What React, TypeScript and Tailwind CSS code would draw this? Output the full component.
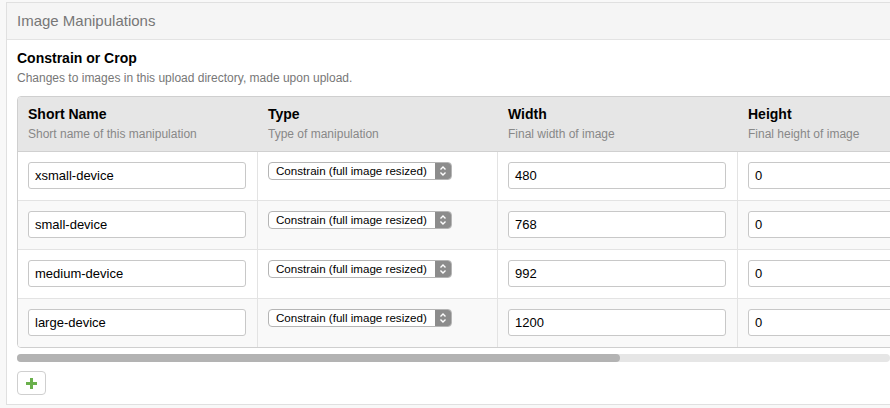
import React from 'react';

const columns = [
  { title: 'Short Name', hint: 'Short name of this manipulation' },
  { title: 'Type', hint: 'Type of manipulation' },
  { title: 'Width', hint: 'Final width of image' },
  { title: 'Height', hint: 'Final height of image' },
  { title: 'Quality', hint: 'Image quality' },
];

const rows = [
  { name: 'xsmall-device', width: '480', height: '0' },
  { name: 'small-device', width: '768', height: '0' },
  { name: 'medium-device', width: '992', height: '0' },
  { name: 'large-device', width: '1200', height: '0' },
];

const SelectBox = () => (
  <div className="flex h-[18px] w-[184px] items-center rounded-[4px] border border-[#b5b5b5] bg-white overflow-hidden">
    <span className="flex-1 pl-[7px] text-[11.6px] leading-none text-black">Constrain (full image resized)</span>
    <span className="flex h-full w-[16px] items-center justify-center bg-[#8c8c8c]">
      <svg width="8" height="12" viewBox="0 0 8 12" fill="none" stroke="white" strokeWidth="1.4">
        <path d="M1.5 4.5 L4 2 L6.5 4.5" />
        <path d="M1.5 7.5 L4 10 L6.5 7.5" />
      </svg>
    </span>
  </div>
);

const TextInput = ({ value }: { value: string }) => (
  <div className="flex h-[27px] w-[218px] items-center rounded-[3px] border border-[#c8c8c8] bg-white pl-[6px] text-[13px] text-black">
    {value}
  </div>
);

const App = () => {
  return (
    <div
      className="h-[408px] w-[890px] overflow-hidden bg-[#f8f8f8] pl-[6px] pt-[2px]"
      style={{ fontFamily: '"Liberation Sans", Arial, sans-serif' }}
    >
      <div className="w-[900px] border-y border-l border-[#e0e0e0] bg-white">
        <div className="flex h-[37px] items-center border-b border-[#e3e3e3] bg-[#f5f5f5] pl-[10px] text-[15px] text-[#777]">
          Image Manipulations
        </div>

        <div className="pl-[10px] pt-[10px] pb-[9px]">
          <h2 className="text-[14px] font-bold leading-[17px] text-black">Constrain or Crop</h2>
          <p className="mt-[4px] text-[12px] leading-[15px] text-[#777]">
            Changes to images in this upload directory, made upon upload.
          </p>

          <div className="mt-[10px] w-[873px] overflow-hidden">
            <div className="w-[1264px] overflow-hidden rounded-[4px] border border-[#cfcfcf]">
              <div className="flex border-b border-[#d0d0d0] bg-[#e6e6e6]">
                {columns.map((c) => (
                  <div key={c.title} className="w-[240px] shrink-0 pl-[10px] pt-[9px] pb-[9px]">
                    <div className="text-[14px] font-bold leading-[17px] text-black">{c.title}</div>
                    <div className="mt-[4px] text-[12px] leading-[15px] text-[#888]">{c.hint}</div>
                  </div>
                ))}
              </div>
              {rows.map((r, i) => (
                <div
                  key={r.name}
                  className={`flex ${i % 2 === 1 ? 'bg-[#f9f9f9]' : 'bg-white'} ${i < rows.length - 1 ? 'border-b border-[#e3e3e3]' : ''}`}
                >
                  <div className="w-[240px] shrink-0 border-r border-[#e3e3e3] pl-[10px] pt-[10px] pb-[11px]">
                    <TextInput value={r.name} />
                  </div>
                  <div className="w-[240px] shrink-0 border-r border-[#e3e3e3] pl-[10px] pt-[10px]">
                    <SelectBox />
                  </div>
                  <div className="w-[240px] shrink-0 border-r border-[#e3e3e3] pl-[10px] pt-[10px]">
                    <TextInput value={r.width} />
                  </div>
                  <div className="w-[240px] shrink-0 border-r border-[#e3e3e3] pl-[10px] pt-[10px]">
                    <TextInput value={r.height} />
                  </div>
                  <div className="w-[240px] shrink-0 pl-[10px] pt-[10px]">
                    <TextInput value="90" />
                  </div>
                </div>
              ))}
            </div>
          </div>

          <div className="mt-[6px] h-[8px] w-[873px] rounded-full bg-[#e6e6e6]">
            <div className="h-full w-[603px] rounded-full bg-[#b3b3b3]" />
          </div>

          <button className="mt-[9px] flex h-[24px] w-[29px] items-center justify-center rounded-[4px] border border-[#cfcfcf] bg-white">
            <svg width="11" height="11" viewBox="0 0 11 11">
              <rect x="4" y="0" width="3" height="11" fill="#6ab04c" />
              <rect x="0" y="4" width="11" height="3" fill="#6ab04c" />
            </svg>
          </button>
        </div>
      </div>
    </div>
  );
};

export default App;
